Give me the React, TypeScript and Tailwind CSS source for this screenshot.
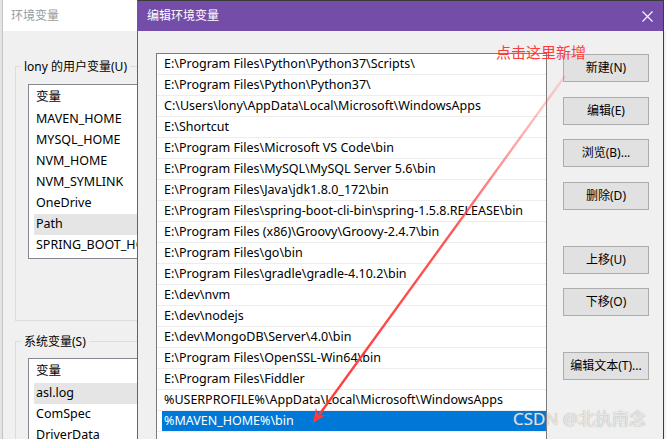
import React from 'react';

const userVars = ['MAVEN_HOME', 'MYSQL_HOME', 'NVM_HOME', 'NVM_SYMLINK', 'OneDrive', 'Path', 'SPRING_BOOT_HOME'];
const sysVars = ['asl.log', 'ComSpec', 'DriverData'];

const paths = [
  'E:\\Program Files\\Python\\Python37\\Scripts\\',
  'E:\\Program Files\\Python\\Python37\\',
  'C:\\Users\\lony\\AppData\\Local\\Microsoft\\WindowsApps',
  'E:\\Shortcut',
  'E:\\Program Files\\Microsoft VS Code\\bin',
  'E:\\Program Files\\MySQL\\MySQL Server 5.6\\bin',
  'E:\\Program Files\\Java\\jdk1.8.0_172\\bin',
  'E:\\Program Files\\spring-boot-cli-bin\\spring-1.5.8.RELEASE\\bin',
  'E:\\Program Files (x86)\\Groovy\\Groovy-2.4.7\\bin',
  'E:\\Program Files\\go\\bin',
  'E:\\Program Files\\gradle\\gradle-4.10.2\\bin',
  'E:\\dev\\nvm',
  'E:\\dev\\nodejs',
  'E:\\dev\\MongoDB\\Server\\4.0\\bin',
  'E:\\Program Files\\OpenSSL-Win64\\bin',
  'E:\\Program Files\\Fiddler',
  '%USERPROFILE%\\AppData\\Local\\Microsoft\\WindowsApps',
  '%MAVEN_HOME%\\bin',
];

const buttons = [
  { label: '新建(N)', gap: 'mt-[1px]' },
  { label: '编辑(E)', gap: 'mt-[15px]' },
  { label: '浏览(B)...', gap: 'mt-[14px]' },
  { label: '删除(D)', gap: 'mt-[15px]' },
  { label: '上移(U)', gap: 'mt-[36px]' },
  { label: '下移(O)', gap: 'mt-[14px]' },
  { label: '编辑文本(T)...', gap: 'mt-[36px]' },
];

const VarList: React.FC<{ items: string[]; selected: string; height: string }> = ({ items, selected, height }) => (
  <div className={`bg-white border border-[#828790] ${height} overflow-hidden text-[12.5px]`}>
    <div className="h-[24px] flex items-center pl-[7px]">变量</div>
    {items.map((name) => (
      <div key={name} className="h-[21px] flex">
        <div className={`ml-[5px] flex-1 flex items-center pl-[2px] whitespace-nowrap ${name === selected ? 'bg-[#e5e5e5]' : ''}`}>
          {name}
        </div>
      </div>
    ))}
  </div>
);

const App: React.FC = () => {
  return (
    <div className="relative w-[666px] h-[439px] overflow-hidden bg-[#f0f0f0] text-[12px] text-black [font-family:'Noto_Sans','Noto_Sans_CJK_SC',sans-serif]">
      {/* background window */}
      <div className="flex h-full">
        <div className="w-[3px] shrink-0 bg-[#e4e4e4] border-r border-[#c4c4c4]" />
        <div className="flex-1 flex flex-col">
          <div className="h-[31px] shrink-0 bg-white flex items-center pl-[8px] text-[#9a9a9a]">环境变量</div>
          <div className="shrink-0 pl-[12px] pt-[27px]">
            <fieldset className="w-[320px] h-[263px] border border-[#dcdcdc] px-[12px] pt-[9px]">
              <legend className="-ml-[7px] px-[3px] leading-[17px]">lony 的用户变量(U)</legend>
              <VarList items={userVars} selected="Path" height="h-[175px]" />
            </fieldset>
            <fieldset className="mt-[12px] w-[320px] h-[200px] border border-[#dcdcdc] px-[12px] pt-[8px]">
              <legend className="-ml-[7px] px-[3px] leading-[17px]">系统变量(S)</legend>
              <VarList items={sysVars} selected="asl.log" height="h-[120px]" />
            </fieldset>
          </div>
        </div>
      </div>

      {/* edit dialog */}
      <div className="absolute left-[137px] top-0 w-[527px] h-[460px] flex flex-col border-l border-r border-t border-l-[#7451a8] border-r-[#3d3d3d] border-t-[#3a3a3a] bg-[#f0f0f0]">
        <div className="h-[30px] shrink-0 bg-[#744da9] flex items-center justify-between pl-[9px] pr-[9px] text-white">
          <span>编辑环境变量</span>
          <svg width="11" height="11" viewBox="0 0 11 11" className="mr-[1px]">
            <path d="M0.5 0.5L10.5 10.5M10.5 0.5L0.5 10.5" stroke="white" strokeWidth="1.1" />
          </svg>
        </div>
        <div className="flex pl-[18px] pt-[22px]">
          <div className="w-[391px] h-[400px] bg-white border border-[#7a7a7a] text-[12.5px]">
            {paths.map((p, i) => {
              const sel = i === paths.length - 1;
              return (
                <div key={p} className="h-[21px] flex border-b border-[#ededed]">
                  <div className={`ml-[5px] flex-1 flex items-center pl-[2px] pt-[1px] whitespace-nowrap ${sel ? 'bg-[#0078d7] text-white' : ''}`}>
                    {p}
                  </div>
                </div>
              );
            })}
          </div>
          <div className="ml-[16px] w-[86px] flex flex-col">
            {buttons.map((b) => (
              <button
                key={b.label}
                className={`${b.gap} h-[28px] bg-[#e1e1e1] border border-[#adadad] flex items-center justify-center`}
              >
                {b.label}
              </button>
            ))}
          </div>
        </div>
      </div>

      {/* annotation */}
      <div className="absolute left-[496px] top-[45px] text-[15px] leading-[15px] text-[#ff3a3a]">点击这里新增</div>
      <svg className="absolute inset-0 pointer-events-none" width="666" height="439">
        <defs>
          <linearGradient id="arrowFade" gradientUnits="userSpaceOnUse" x1="565" y1="76" x2="318" y2="416">
            <stop offset="0" stopColor="#ff3b3b" stopOpacity="0.15" />
            <stop offset="0.45" stopColor="#ff3b3b" stopOpacity="0.85" />
            <stop offset="1" stopColor="#ff3b3b" stopOpacity="1" />
          </linearGradient>
        </defs>
        <line x1="565" y1="76" x2="319" y2="415" stroke="url(#arrowFade)" strokeWidth="2.4" />
        <polygon points="313,423 316,408 318.5,415.5 326,415" fill="#ff3b3b" />
      </svg>

      {/* watermark */}
      <div className="absolute left-[513px] top-[409px] text-[17px] leading-[20px] text-[#ffffffc8] [text-shadow:0_0_1px_#8a8a8a] whitespace-nowrap">
        CSDN @北执南念
      </div>
    </div>
  );
};

export default App;
